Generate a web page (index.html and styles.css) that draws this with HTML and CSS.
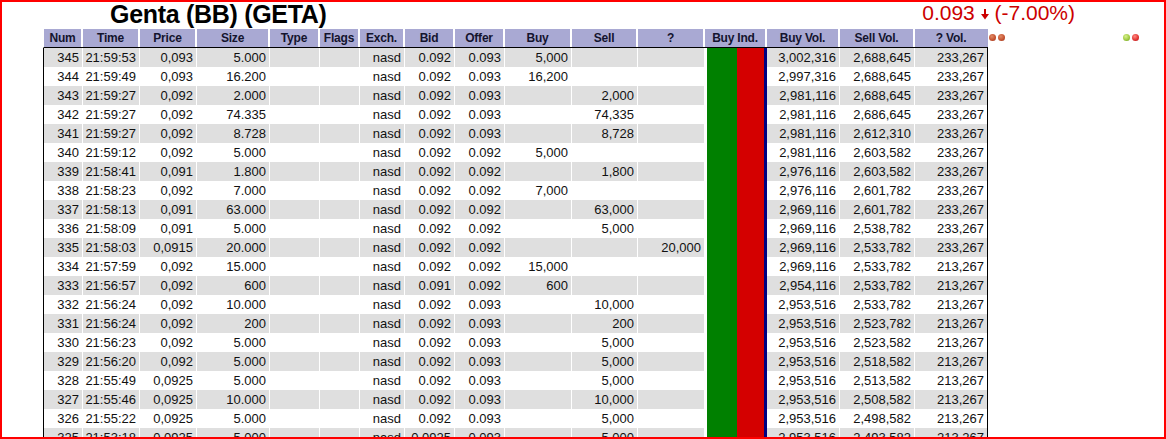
FILE: index.html
```html
<!DOCTYPE html>
<html>
<head>
<meta charset="utf-8">
<link rel="stylesheet" href="styles.css">
</head>
<body>
<div class="frame">
  <div class="top">
    <h1 class="title">Genta (BB) (GETA)</h1>
    <div class="quote">0.093 <svg class="arrow" width="8" height="11" viewBox="0 0 8 11"><rect x="3" y="0" width="2" height="6" fill="#cc0000"/><polygon points="0,5 8,5 4,10.5" fill="#cc0000"/></svg> (-7.00%)</div>
  </div>
  <div class="main">
    <div class="grid">
      <div class="thead">
        <div class="th">Num</div><div class="th">Time</div><div class="th">Price</div><div class="th">Size</div><div class="th">Type</div><div class="th">Flags</div><div class="th">Exch.</div><div class="th">Bid</div><div class="th">Offer</div><div class="th">Buy</div><div class="th">Sell</div><div class="th">?</div><div class="th">Buy Ind.</div><div class="th">Buy Vol.</div><div class="th">Sell Vol.</div><div class="th last">? Vol.</div>
      </div>
      <div class="tbody" id="tbody"></div>
    </div>
    <div class="dots">
      <span class="dot brown"></span><span class="dot brown"></span>
    </div>
    <div class="dots right">
      <span class="dot green"></span><span class="dot red"></span>
    </div>
  </div>
</div>
<script>
var rows = [
["345","21:59:53","0,093","5.000","0.092","0.093","5,000","","","3,002,316","2,688,645","233,267"],
["344","21:59:49","0,093","16.200","0.092","0.093","16,200","","","2,997,316","2,688,645","233,267"],
["343","21:59:27","0,092","2.000","0.092","0.093","","2,000","","2,981,116","2,688,645","233,267"],
["342","21:59:27","0,092","74.335","0.092","0.093","","74,335","","2,981,116","2,686,645","233,267"],
["341","21:59:27","0,092","8.728","0.092","0.093","","8,728","","2,981,116","2,612,310","233,267"],
["340","21:59:12","0,092","5.000","0.092","0.092","5,000","","","2,981,116","2,603,582","233,267"],
["339","21:58:41","0,091","1.800","0.092","0.092","","1,800","","2,976,116","2,603,582","233,267"],
["338","21:58:23","0,092","7.000","0.092","0.092","7,000","","","2,976,116","2,601,782","233,267"],
["337","21:58:13","0,091","63.000","0.092","0.092","","63,000","","2,969,116","2,601,782","233,267"],
["336","21:58:09","0,091","5.000","0.092","0.092","","5,000","","2,969,116","2,538,782","233,267"],
["335","21:58:03","0,0915","20.000","0.092","0.092","","","20,000","2,969,116","2,533,782","233,267"],
["334","21:57:59","0,092","15.000","0.092","0.092","15,000","","","2,969,116","2,533,782","213,267"],
["333","21:56:57","0,092","600","0.091","0.092","600","","","2,954,116","2,533,782","213,267"],
["332","21:56:24","0,092","10.000","0.092","0.093","","10,000","","2,953,516","2,533,782","213,267"],
["331","21:56:24","0,092","200","0.092","0.093","","200","","2,953,516","2,523,782","213,267"],
["330","21:56:23","0,092","5.000","0.092","0.093","","5,000","","2,953,516","2,523,582","213,267"],
["329","21:56:20","0,092","5.000","0.092","0.093","","5,000","","2,953,516","2,518,582","213,267"],
["328","21:55:49","0,0925","5.000","0.092","0.093","","5,000","","2,953,516","2,513,582","213,267"],
["327","21:55:46","0,0925","10.000","0.092","0.093","","10,000","","2,953,516","2,508,582","213,267"],
["326","21:55:22","0,0925","5.000","0.092","0.093","","5,000","","2,953,516","2,498,582","213,267"],
["325","21:53:18","0,0925","5.000","0.0925","0.093","","5,000","","2,953,516","2,493,582","213,267"]
];
var tb = document.getElementById("tbody");
var html = "";
rows.forEach(function(r, i){
  html += '<div class="tr' + (i % 2 === 0 ? ' alt' : '') + '">' +
    '<div class="td">' + r[0] + '</div>' +
    '<div class="td">' + r[1] + '</div>' +
    '<div class="td">' + r[2] + '</div>' +
    '<div class="td">' + r[3] + '</div>' +
    '<div class="td"></div>' +
    '<div class="td"></div>' +
    '<div class="td">nasd</div>' +
    '<div class="td">' + r[4] + '</div>' +
    '<div class="td">' + r[5] + '</div>' +
    '<div class="td">' + r[6] + '</div>' +
    '<div class="td">' + r[7] + '</div>' +
    '<div class="td">' + r[8] + '</div>' +
    '<div class="ind"></div>' +
    '<div class="td">' + r[9] + '</div>' +
    '<div class="td">' + r[10] + '</div>' +
    '<div class="td last">' + r[11] + '</div>' +
    '</div>';
});
tb.innerHTML = html;
</script>
</body>
</html>
```
FILE: styles.css
```css
* { box-sizing: border-box; margin: 0; padding: 0; }
html, body { width: 1166px; height: 439px; overflow: hidden; background: #fff; }
body { font-family: "Liberation Sans", Arial, sans-serif; color: #000; }

.frame {
  width: 1166px;
  height: 439px;
  border: 2px solid #f00;
  overflow: hidden;
}

.top {
  display: flex;
  align-items: flex-start;
  height: 27px;
}
.title {
  margin-left: 108px;
  font-size: 25px;
  line-height: 25px;
  font-weight: bold;
  letter-spacing: -0.3px;
  color: #000;
  white-space: nowrap;
}
.quote {
  margin-left: auto;
  margin-right: 89px;
  font-size: 21px;
  line-height: 21px;
  color: #cc0000;
  white-space: nowrap;
}
.arrow { display: inline-block; vertical-align: baseline; }

.main {
  display: flex;
  align-items: flex-start;
}
.grid {
  margin-left: 41px;
  width: 945px;
  flex: none;
}
.thead, .tr {
  display: grid;
  grid-template-columns: 39px 57px 57px 73px 50px 40px 45px 50px 50px 67px 66px 67px 62px 73px 75px 73px;
}
.thead {
  height: 19px;
  border-left: 1px solid #fff;
  border-bottom: 1px solid #000;
}
.th {
  background: #a9a9d3;
  border-right: 2px solid #fff;
  text-align: center;
  font-size: 12px;
  line-height: 18px;
  font-weight: bold;
  letter-spacing: -0.2px;
  color: #14142e;
  white-space: nowrap;
  overflow: hidden;
}
.th.last { border-right: 1px solid #a9a9d3; }

.tr {
  height: 19px;
  border-left: 1px solid #000;
  background: #fff;
}
.tr.alt { background: #dfdfdf; }
.td {
  border-right: 1px solid #fff;
  text-align: right;
  padding-right: 3px;
  font-size: 13px;
  line-height: 19px;
  color: #111;
  white-space: nowrap;
  overflow: hidden;
}
.td.last { border-right: 1px solid #000; }
.ind {
  background: linear-gradient(to right, #fff 0 2px, #008000 2px 32px, #d40000 32px 59px, #000080 59px 62px);
}

.dots {
  display: flex;
  gap: 2px;
  margin-top: 5px;
  margin-left: 1px;
}
.dots.right {
  margin-left: auto;
  margin-right: 25px;
}
.dot {
  width: 7px;
  height: 7px;
  border-radius: 50%;
  display: block;
}
.dot.brown { background: radial-gradient(circle at 40% 35%, #e08a66 0, #c4502e 60%, #8a3018 100%); }
.dot.green { background: radial-gradient(circle at 40% 35%, #d8f090 0, #9cc83c 60%, #5c8a18 100%); }
.dot.red { background: radial-gradient(circle at 40% 35%, #ff8a80 0, #e03030 60%, #9a1a14 100%); }
```
